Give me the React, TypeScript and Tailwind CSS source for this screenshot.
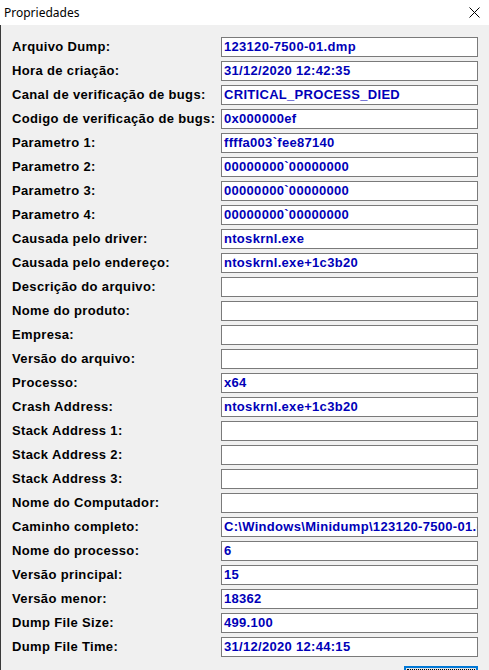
const rows: [string, string][] = [
  ['Arquivo Dump:', '123120-7500-01.dmp'],
  ['Hora de criação:', '31/12/2020 12:42:35'],
  ['Canal de verificação de bugs:', 'CRITICAL_PROCESS_DIED'],
  ['Codigo de verificação de bugs:', '0x000000ef'],
  ['Parametro 1:', 'ffffa003`fee87140'],
  ['Parametro 2:', '00000000`00000000'],
  ['Parametro 3:', '00000000`00000000'],
  ['Parametro 4:', '00000000`00000000'],
  ['Causada pelo driver:', 'ntoskrnl.exe'],
  ['Causada pelo endereço:', 'ntoskrnl.exe+1c3b20'],
  ['Descrição do arquivo:', ''],
  ['Nome do produto:', ''],
  ['Empresa:', ''],
  ['Versão do arquivo:', ''],
  ['Processo:', 'x64'],
  ['Crash Address:', 'ntoskrnl.exe+1c3b20'],
  ['Stack Address 1:', ''],
  ['Stack Address 2:', ''],
  ['Stack Address 3:', ''],
  ['Nome do Computador:', ''],
  ['Caminho completo:', 'C:\\Windows\\Minidump\\123120-7500-01.dmp'],
  ['Nome do processo:', '6'],
  ['Versão principal:', '15'],
  ['Versão menor:', '18362'],
  ['Dump File Size:', '499.100'],
  ['Dump File Time:', '31/12/2020 12:44:15'],
];

export default function App() {
  return (
    <div className="flex h-[670px] w-[489px] flex-col overflow-hidden bg-[#f0f0f0]">
      <div className="flex h-[25px] shrink-0 items-center justify-between bg-white pl-[4px] pr-[9px]">
        <span className="text-[12px] text-black [font-family:'Noto_Sans',sans-serif]">
          Propriedades
        </span>
        <svg width="11" height="11" viewBox="0 0 11 11" className="text-black">
          <path d="M0.5 0.5 L10.5 10.5 M10.5 0.5 L0.5 10.5" stroke="currentColor" strokeWidth="1" />
        </svg>
      </div>
      <div className="flex flex-1 flex-col border-l border-[#3a3a3a] pt-[12px] pl-[11px] [font-family:'Liberation_Sans',Arial,sans-serif]">
        <div className="grid grid-cols-[209px_257px] gap-y-[4px]">
          {rows.map(([label, value]) => (
            <div key={label} className="contents">
              <div className="flex h-[20px] items-center whitespace-nowrap text-[13px] font-bold tracking-[0.35px] text-black">
                {label}
              </div>
              <div className="flex h-[20px] items-center overflow-hidden whitespace-nowrap border border-[#7a7a7a] bg-white pl-[2px] text-[13px] font-bold tracking-[0.3px] text-[#0000b8]">
                {value}
              </div>
            </div>
          ))}
        </div>
        <div className="mt-[9px] flex justify-end pr-[11px]">
          <button className="h-[23px] w-[74px] border-2 border-[#0078d7] bg-[#e1e1e1] p-[1px]">
            <div className="h-full w-full border border-dotted border-black" />
          </button>
        </div>
      </div>
    </div>
  );
}
